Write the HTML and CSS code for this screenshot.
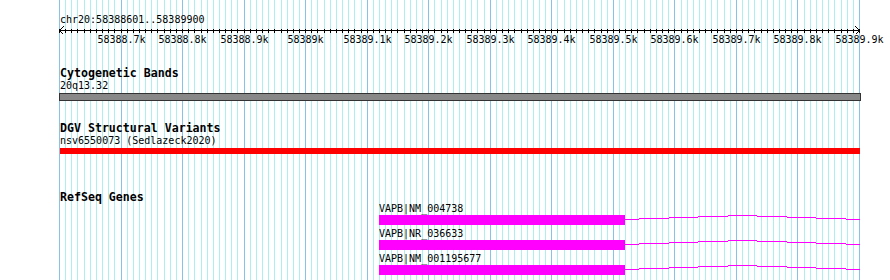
FILE: index.html
```html
<!DOCTYPE html>
<html>
<head>
<meta charset="utf-8">
<title>Genome view</title>
<link rel="stylesheet" href="styles.css">
</head>
<body>
<div class="view">
  <svg class="grid" id="grid" width="803" height="280"></svg>
  <div class="tracks">
    <div class="ruler">
      <div class="loc">chr20:58388601..58389900</div>
      <svg class="axis" id="axis" width="803" height="8"></svg>
      <div class="ticklabels">
        <span class="tl" style="left:61.5px">58388.7k</span>
        <span class="tl" style="left:122.5px">58388.8k</span>
        <span class="tl" style="left:184.5px">58388.9k</span>
        <span class="tl" style="left:245.5px">58389k</span>
        <span class="tl" style="left:307.5px">58389.1k</span>
        <span class="tl" style="left:368.5px">58389.2k</span>
        <span class="tl" style="left:430.5px">58389.3k</span>
        <span class="tl" style="left:491.5px">58389.4k</span>
        <span class="tl" style="left:553.5px">58389.5k</span>
        <span class="tl" style="left:614.5px">58389.6k</span>
        <span class="tl" style="left:676.5px">58389.7k</span>
        <span class="tl" style="left:737.5px">58389.8k</span>
        <span class="tl" style="left:799.5px">58389.9k</span>
      </div>
    </div>

    <section class="track track-cyto">
      <h2 class="track-title">Cytogenetic Bands</h2>
      <div class="feat-label">20q13.32</div>
      <div class="band"></div>
    </section>

    <section class="track track-dgv">
      <h2 class="track-title">DGV Structural Variants</h2>
      <div class="feat-label">nsv6550073 (Sedlazeck2020)</div>
      <div class="variant"></div>
    </section>

    <section class="track track-genes">
      <h2 class="track-title">RefSeq Genes</h2>
      <div class="gene">
        <div class="gene-label">VAPB|NM_004738</div>
        <div class="gene-model">
          <div class="exon"></div>
          <svg class="intron" width="235" height="10" viewBox="0 0 235 10"><path d="M0 4h14v1H0zM14 3h30v1H14zM44 2h29v1H44zM73 1h30v1H73zM103 0h29v1H103zM132 1h30v1H132zM162 2h29v1H162zM191 3h30v1H191zM221 4h14v1H221z"/></svg>
        </div>
      </div>
      <div class="gene">
        <div class="gene-label">VAPB|NR_036633</div>
        <div class="gene-model">
          <div class="exon"></div>
          <svg class="intron" width="235" height="10" viewBox="0 0 235 10"><path d="M0 4h14v1H0zM14 3h30v1H14zM44 2h29v1H44zM73 1h30v1H73zM103 0h29v1H103zM132 1h30v1H132zM162 2h29v1H162zM191 3h30v1H191zM221 4h14v1H221z"/></svg>
        </div>
      </div>
      <div class="gene">
        <div class="gene-label">VAPB|NM_001195677</div>
        <div class="gene-model">
          <div class="exon"></div>
          <svg class="intron" width="235" height="10" viewBox="0 0 235 10"><path d="M0 4h14v1H0zM14 3h30v1H14zM44 2h29v1H44zM73 1h30v1H73zM103 0h29v1H103zM132 1h30v1H132zM162 2h29v1H162zM191 3h30v1H191zM221 4h14v1H221z"/></svg>
        </div>
      </div>
    </section>
  </div>
</div>
<script src="script.js"></script>
</body>
</html>
```

FILE: styles.css
```css
html, body {
  margin: 0;
  padding: 0;
  background: #ffffff;
}

body {
  width: 890px;
  height: 280px;
  overflow: hidden;
  font-family: "DejaVu Sans Mono", "Liberation Mono", monospace;
  font-size: 10px;
  color: #000;
}

.view {
  position: relative;
  width: 890px;
  height: 280px;
}

.grid {
  position: absolute;
  left: 59px;
  top: 0;
  shape-rendering: crispEdges;
}

.gl-minor { fill: #aeeeee; }
.gl-major { fill: #87c3e6; }

.tracks {
  position: relative;
  padding-left: 60px;
}

/* ruler */
.ruler {
  padding-top: 14px;
}

.loc {
  line-height: 12px;
  height: 12px;
  white-space: nowrap;
}

.axis {
  display: block;
  margin-left: -1px;
  shape-rendering: crispEdges;
}

.axis .ax { fill: #000; }
.axis .arrow { fill: none; stroke: #000; stroke-width: 1; }

.ticklabels {
  position: relative;
  height: 12px;
  line-height: 12px;
}

.tl {
  position: absolute;
  top: 0;
  transform: translateX(-50%);
  white-space: nowrap;
}

/* tracks */
.track-title {
  margin: 0;
  font-size: 11.6px;
  font-weight: bold;
  line-height: 11px;
  height: 11px;
  white-space: nowrap;
}

.track-cyto { margin-top: 22px; }
.track-dgv { margin-top: 22px; }
.track-genes { margin-top: 38px; }

.feat-label {
  margin-top: 1px;
  line-height: 12px;
  height: 12px;
  white-space: nowrap;
}

.band {
  box-sizing: border-box;
  margin-top: 1px;
  margin-left: -1px;
  width: 802px;
  height: 8px;
  background: #888888;
  border: 1px solid #333333;
}

.variant {
  margin-top: 1px;
  width: 800px;
  height: 6px;
  background: #ff0000;
}

/* genes */
.gene {
  margin-left: 319px;
  padding-bottom: 3px;
}

.gene-label {
  line-height: 11px;
  height: 11px;
  white-space: nowrap;
}

.gene-model {
  display: flex;
  margin-top: 1px;
  height: 10px;
}

.exon {
  width: 246px;
  height: 10px;
  background: #ff00ff;
}

.intron {
  display: block;
  fill: #ff00ff;
  shape-rendering: crispEdges;
}
```

FILE: script.js
```js
(function () {
  var NS = 'http://www.w3.org/2000/svg';
  var grid = document.getElementById('grid');
  var axis = document.getElementById('axis');
  var span = 800, n = 130;

  function rect(parent, x, y, w, h, cls) {
    var r = document.createElementNS(NS, 'rect');
    r.setAttribute('x', x);
    r.setAttribute('y', y);
    r.setAttribute('width', w);
    r.setAttribute('height', h);
    r.setAttribute('class', cls);
    parent.appendChild(r);
  }

  for (var i = 0; i <= n; i++) {
    var x = Math.round(i * span / n);
    rect(grid, x, 0, 1, 280, i % 10 === 0 ? 'gl-major' : 'gl-minor');
    rect(axis, x, 3, 1, 4, 'ax');
  }
  // axis line
  rect(axis, 0, 4, 801, 1, 'ax');

  // arrows
  var l = document.createElementNS(NS, 'polyline');
  l.setAttribute('points', '4.5,0.5 0.5,4.5 4.5,8.5');
  l.setAttribute('class', 'arrow');
  axis.appendChild(l);
  var r = document.createElementNS(NS, 'polyline');
  r.setAttribute('points', '796.5,0.5 800.5,4.5 796.5,8.5');
  r.setAttribute('class', 'arrow');
  axis.appendChild(r);
})();
```
